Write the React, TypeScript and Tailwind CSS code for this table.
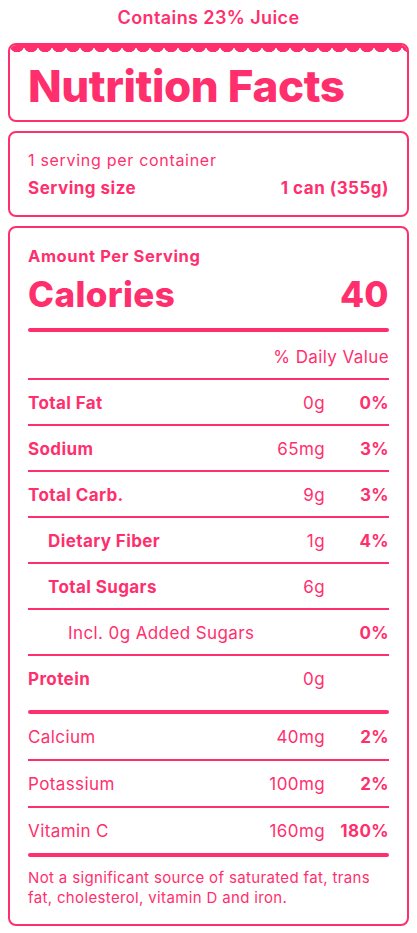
type Nutrient = {
  label: string;
  amount?: string;
  dv?: string;
  bold?: boolean;
  indent?: 0 | 1 | 2;
};

const macros: Nutrient[] = [
  { label: "Total Fat", amount: "0g", dv: "0%", bold: true },
  { label: "Sodium", amount: "65mg", dv: "3%", bold: true },
  { label: "Total Carb.", amount: "9g", dv: "3%", bold: true },
  { label: "Dietary Fiber", amount: "1g", dv: "4%", bold: true, indent: 1 },
  { label: "Total Sugars", amount: "6g", bold: true, indent: 1 },
  { label: "Incl. 0g Added Sugars", dv: "0%", indent: 2 },
  { label: "Protein", amount: "0g", bold: true },
];

const vitamins: Nutrient[] = [
  { label: "Calcium", amount: "40mg", dv: "2%" },
  { label: "Potassium", amount: "100mg", dv: "2%" },
  { label: "Vitamin C", amount: "160mg", dv: "180%" },
];

function Row({ item, rowClass }: { item: Nutrient; rowClass: string }) {
  const pad = item.indent === 2 ? "pl-10" : item.indent === 1 ? "pl-5" : "";
  return (
    <div className={`flex items-center pt-[3px] text-[17px] tracking-[0.4px] ${rowClass}`}>
      <span className={`flex-1 ${pad} ${item.bold ? "font-bold" : "font-normal"}`}>{item.label}</span>
      <span className="text-right">{item.amount}</span>
      <span className="w-16 text-right font-bold">{item.dv}</span>
    </div>
  );
}

export default function App() {
  return (
    <div className="min-h-[933px] bg-white px-2 pt-[6px] text-[#ff2f6e] font-[family-name:Inter,sans-serif]">
      {/* Header line */}
      <p className="text-center text-[18px] leading-6 font-semibold tracking-[0.4px]">Contains 23% Juice</p>

      {/* Title box with scalloped top */}
      <div className="mt-[13px] overflow-hidden rounded-lg border-2 border-[#ff2f6e]">
        <div className="h-[7px] bg-[radial-gradient(circle_at_7px_0,#ff2f6e_7px,transparent_7.5px)] bg-[length:14px_7px] bg-repeat-x" />
        <h1 className="px-[18px] pt-[10px] pb-[10px] text-[44px] leading-[48px] font-extrabold tracking-[-0.4px]">
          Nutrition Facts
        </h1>
      </div>

      {/* Serving box */}
      <div className="mt-[9px] rounded-lg border-2 border-[#ff2f6e] px-[18px] py-4">
        <p className="text-[16px] leading-[22px] tracking-[0.7px]">1 serving per container</p>
        <div className="mt-[6px] flex justify-between text-[17px] leading-[22px] font-bold tracking-[0.5px]">
          <span>Serving size</span>
          <span>1 can (355g)</span>
        </div>
      </div>

      {/* Main facts box */}
      <div className="mt-[9px] rounded-lg border-2 border-[#ff2f6e] px-[18px] pt-4 pb-4">
        <p className="pt-[2px] text-[16.5px] leading-5 font-bold tracking-[0.6px]">Amount Per Serving</p>
        <div className="mt-[8px] flex justify-between text-[35px] leading-[40px] font-extrabold tracking-[0.4px]">
          <span>Calories</span>
          <span>40</span>
        </div>
        <div className="mt-[14px] h-1 rounded-full bg-[#ff2f6e]" />
        <div className="flex h-[48px] items-center justify-end border-b-2 border-[#ff2f6e] pt-[5px] text-[17px] tracking-[0.4px]">
          % Daily Value
        </div>

        {macros.map((m, i) => (
          <Row
            key={m.label}
            item={m}
            rowClass={i < macros.length - 1 ? "h-[46px] border-b-2 border-[#ff2f6e]" : "h-[44px]"}
          />
        ))}

        <div className="mt-[10px] h-1 rounded-full bg-[#ff2f6e]" />

        {vitamins.map((v, i) => (
          <Row
            key={v.label}
            item={v}
            rowClass={i < vitamins.length - 1 ? "h-[47px] border-b-2 border-[#ff2f6e]" : "h-[45px]"}
          />
        ))}

        <div className="h-1 rounded-full bg-[#ff2f6e]" />
        <p className="mt-[11px] text-[15px] leading-5 tracking-[0.35px]">
          Not a significant source of saturated fat, trans fat, cholesterol, vitamin D and iron.
        </p>
      </div>
    </div>
  );
}
